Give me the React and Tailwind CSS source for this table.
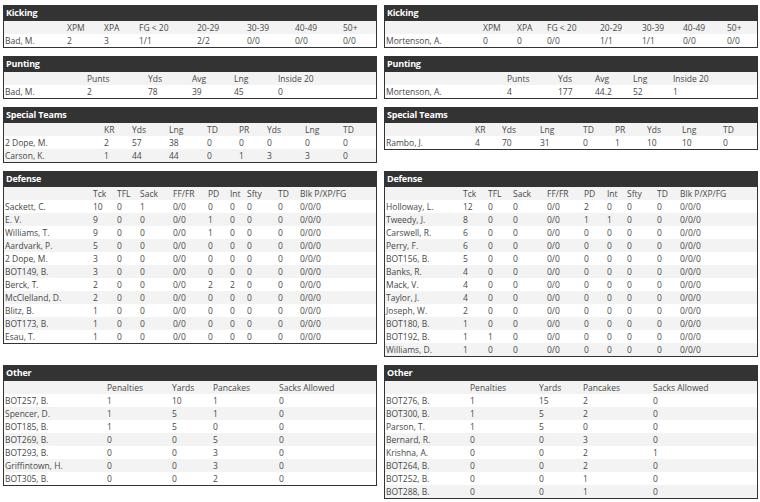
import React from "react";

const sections = [
  {
    title: "Kicking",
    cols: "grid-cols-[62px_37px_35px_58px_50px_48px_48px_1fr]",
    head: ["", "XPM", "XPA", "FG < 20", "20-29", "30-39", "40-49", "50+"],
    rows: [["Bad, M.", "2", "3", "1/1", "2/2", "0/0", "0/0", "0/0"]],
  },
  {
    title: "Kicking",
    cols: "grid-cols-[97px_34px_30px_53px_42px_41px_44px_1fr]",
    head: ["", "XPM", "XPA", "FG < 20", "20-29", "30-39", "40-49", "50+"],
    rows: [["Mortenson, A.", "0", "0", "0/0", "1/1", "1/1", "0/0", "0/0"]],
  },
  {
    title: "Punting",
    cols: "grid-cols-[82px_61px_44px_42px_44px_1fr]",
    head: ["", "Punts", "Yds", "Avg", "Lng", "Inside 20"],
    rows: [["Bad, M.", "2", "78", "39", "45", "0"]],
  },
  {
    title: "Punting",
    cols: "grid-cols-[121px_51px_37px_38px_40px_1fr]",
    head: ["", "Punts", "Yds", "Avg", "Lng", "Inside 20"],
    rows: [["Mortenson, A.", "4", "177", "44.2", "52", "1"]],
  },
  {
    title: "Special Teams",
    cols: "grid-cols-[99px_28px_37px_38px_32px_28px_38px_38px_1fr]",
    head: ["", "KR", "Yds", "Lng", "TD", "PR", "Yds", "Lng", "TD"],
    rows: [
      ["2 Dope, M.", "2", "57", "38", "0", "0", "0", "0", "0"],
      ["Carson, K.", "1", "44", "44", "0", "1", "3", "3", "0"],
    ],
  },
  {
    title: "Special Teams",
    cols: "grid-cols-[89px_27px_38px_43px_32px_32px_35px_41px_1fr]",
    head: ["", "KR", "Yds", "Lng", "TD", "PR", "Yds", "Lng", "TD"],
    rows: [["Rambo, J.", "4", "70", "31", "0", "1", "10", "10", "0"]],
  },
  {
    title: "Defense",
    cols: "grid-cols-[88px_24px_23px_33px_35px_22px_17px_31px_22px_1fr]",
    head: ["", "Tck", "TFL", "Sack", "FF/FR", "PD", "Int", "Sfty", "TD", "Blk P/XP/FG"],
    rows: [
      ["Sackett, C.", "10", "0", "1", "0/0", "0", "0", "0", "0", "0/0/0"],
      ["E. V.", "9", "0", "0", "0/0", "1", "0", "0", "0", "0/0/0"],
      ["Williams, T.", "9", "0", "0", "0/0", "1", "0", "0", "0", "0/0/0"],
      ["Aardvark, P.", "5", "0", "0", "0/0", "0", "0", "0", "0", "0/0/0"],
      ["2 Dope, M.", "3", "0", "0", "0/0", "0", "0", "0", "0", "0/0/0"],
      ["BOT149, B.", "3", "0", "0", "0/0", "0", "0", "0", "0", "0/0/0"],
      ["Berck, T.", "2", "0", "0", "0/0", "2", "2", "0", "0", "0/0/0"],
      ["McClelland, D.", "2", "0", "0", "0/0", "0", "0", "0", "0", "0/0/0"],
      ["Blitz, B.", "1", "0", "0", "0/0", "0", "0", "0", "0", "0/0/0"],
      ["BOT173, B.", "1", "0", "0", "0/0", "0", "0", "0", "0", "0/0/0"],
      ["Esau, T.", "1", "0", "0", "0/0", "0", "0", "0", "0", "0/0/0"],
    ],
  },
  {
    title: "Defense",
    cols: "grid-cols-[77px_25px_25px_34px_37px_23px_20px_30px_23px_1fr]",
    head: ["", "Tck", "TFL", "Sack", "FF/FR", "PD", "Int", "Sfty", "TD", "Blk P/XP/FG"],
    rows: [
      ["Holloway, L.", "12", "0", "0", "0/0", "2", "0", "0", "0", "0/0/0"],
      ["Tweedy, J.", "8", "0", "0", "0/0", "1", "1", "0", "0", "0/0/0"],
      ["Carswell, R.", "6", "0", "0", "0/0", "0", "0", "0", "0", "0/0/0"],
      ["Perry, F.", "6", "0", "0", "0/0", "0", "0", "0", "0", "0/0/0"],
      ["BOT156, B.", "5", "0", "0", "0/0", "0", "0", "0", "0", "0/0/0"],
      ["Banks, R.", "4", "0", "0", "0/0", "0", "0", "0", "0", "0/0/0"],
      ["Mack, V.", "4", "0", "0", "0/0", "0", "0", "0", "0", "0/0/0"],
      ["Taylor, J.", "4", "0", "0", "0/0", "0", "0", "0", "0", "0/0/0"],
      ["Joseph, W.", "2", "0", "0", "0/0", "0", "0", "0", "0", "0/0/0"],
      ["BOT180, B.", "1", "0", "0", "0/0", "0", "0", "0", "0", "0/0/0"],
      ["BOT192, B.", "1", "1", "0", "0/0", "0", "0", "0", "0", "0/0/0"],
      ["Williams, D.", "1", "0", "0", "0/0", "0", "0", "0", "0", "0/0/0"],
    ],
  },
  {
    title: "Other",
    cols: "grid-cols-[102px_65px_41px_66px_1fr]",
    head: ["", "Penalties", "Yards", "Pancakes", "Sacks Allowed"],
    rows: [
      ["BOT257, B.", "1", "10", "1", "0"],
      ["Spencer, D.", "1", "5", "1", "0"],
      ["BOT185, B.", "1", "5", "0", "0"],
      ["BOT269, B.", "0", "0", "5", "0"],
      ["BOT293, B.", "0", "0", "3", "0"],
      ["Griffintown, H.", "0", "0", "3", "0"],
      ["BOT305, B.", "0", "0", "2", "0"],
    ],
  },
  {
    title: "Other",
    cols: "grid-cols-[84px_69px_44px_70px_1fr]",
    head: ["", "Penalties", "Yards", "Pancakes", "Sacks Allowed"],
    rows: [
      ["BOT276, B.", "1", "15", "2", "0"],
      ["BOT300, B.", "1", "5", "2", "0"],
      ["Parson, T.", "1", "5", "0", "0"],
      ["Bernard, R.", "0", "0", "3", "0"],
      ["Krishna, A.", "0", "0", "2", "1"],
      ["BOT264, B.", "0", "0", "2", "0"],
      ["BOT252, B.", "0", "0", "1", "0"],
      ["BOT288, B.", "0", "0", "1", "0"],
    ],
  },
];

function Row({ cells, cols, bg }) {
  return (
    <div className={`grid ${cols} h-[13px] items-center ${bg}`}>
      {cells.map((c, i) => (
        <div key={i} className="pl-[1px] leading-[13px] whitespace-nowrap">
          {c}
        </div>
      ))}
    </div>
  );
}

function Section({ s }) {
  return (
    <div className="flex flex-col">
      <div className="h-[16px] bg-[#333333] pl-[3px] text-[9px] font-bold leading-[16px] tracking-[-0.2px] text-white">
        {s.title}
      </div>
      <div className="border-x border-b border-[#333333] text-[8.5px] text-[#484848]">
        <Row cells={s.head} cols={s.cols} bg="bg-[#f3f3f3]" />
        {s.rows.map((r, i) => (
          <Row
            key={i}
            cells={r}
            cols={s.cols}
            bg={i % 2 === 0 ? "bg-white" : "bg-[#f3f3f3]"}
          />
        ))}
      </div>
    </div>
  );
}

export default function App() {
  return (
    <div
      className="h-[502px] w-[760px] bg-white pl-[3px] pt-[5px]"
      style={{ fontFamily: '"Open Sans", sans-serif' }}
    >
      <div className="grid grid-cols-[374px_374px] items-start gap-x-[7px] gap-y-[8px]">
        {sections.map((s, i) => (
          <Section key={i} s={s} />
        ))}
      </div>
    </div>
  );
}
